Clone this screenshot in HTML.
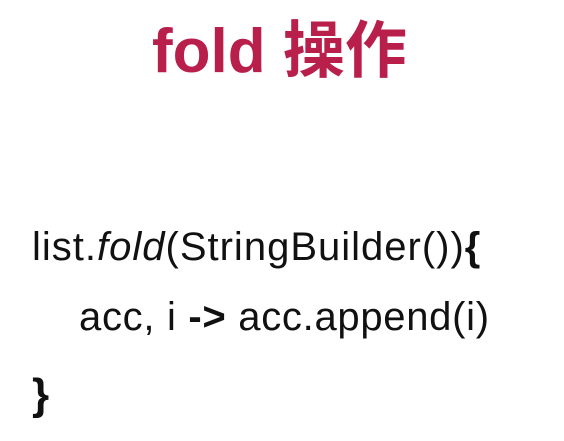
<!DOCTYPE html>
<html><head><meta charset="utf-8"><style>
html,body{margin:0;padding:0;background:#fff;width:564px;height:441px;overflow:hidden}
.t{position:absolute;left:152px;top:21px;font:bold 62px "Liberation Sans","Noto Sans CJK SC",sans-serif;color:#b91f4b;white-space:nowrap;line-height:1}
.l{position:absolute;font-family:"Liberation Sans",sans-serif;font-size:40px;color:#111;white-space:nowrap;line-height:1}
</style></head><body>
<div class="t">fold 操作</div>
<div class="l" style="left:32px;top:227px;letter-spacing:1px">list.<i>fold</i>(StringBuilder())<b>{</b></div>
<div class="l" style="left:79px;top:297px;letter-spacing:0.7px">acc, i <b>-&gt;</b> acc.append(i)</div>
<div class="l" style="left:32px;top:373px;font-size:44px"><b>}</b></div>
</body></html>
